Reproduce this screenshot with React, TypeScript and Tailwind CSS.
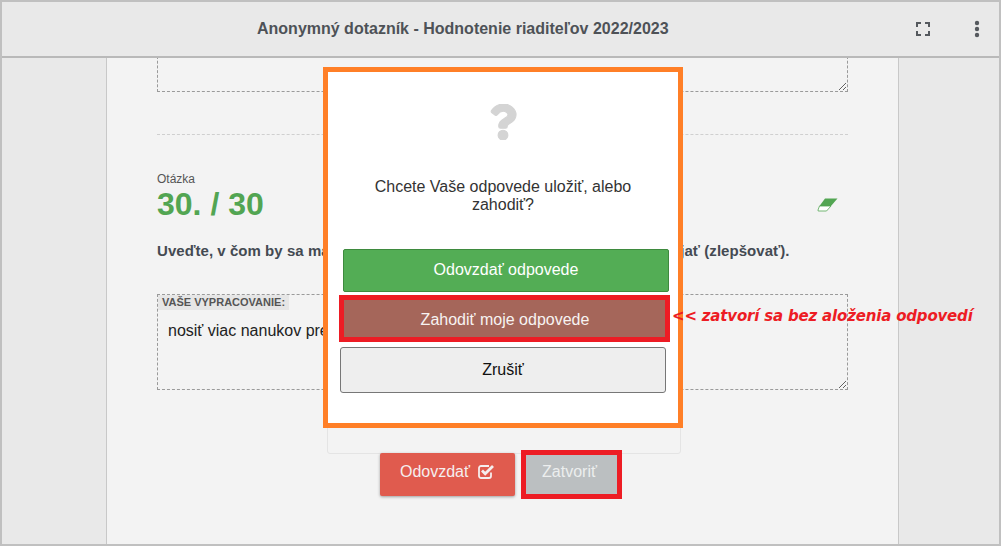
import { FaQuestion } from "react-icons/fa";

const SANS = "font-['Liberation_Sans',Arial,sans-serif]";

function FullscreenIcon() {
  return (
    <svg width="14" height="14" viewBox="0 0 14 14" fill="none" stroke="#55595e" strokeWidth="2">
      <path d="M1 5V1h4M9 1h4v4M13 9v4H9M5 13H1V9" />
    </svg>
  );
}

function DotsIcon() {
  return (
    <svg width="6" height="18" viewBox="0 0 6 18" fill="#55595e">
      <circle cx="3" cy="3" r="2.2" />
      <circle cx="3" cy="9" r="2.2" />
      <circle cx="3" cy="15" r="2.2" />
    </svg>
  );
}

function EraserIcon() {
  return (
    <svg width="21" height="14" viewBox="0 0 21 14">
      <path d="M8 .5h12.5L14 8H2.5z" fill="#52a552" />
      <path d="M2.500 8H14l-4.500 5H1.200L1 12z" fill="#fff" stroke="#52a552" strokeWidth="0.800" />
    </svg>
  );
}

function CheckIcon() {
  return (
    <svg width="17" height="15" viewBox="0 0 17 15" fill="none" stroke="#f5eeee">
      <path d="M13 8.500V12a2 2 0 0 1-2 2H3a2 2 0 0 1-2-2V4a2 2 0 0 1 2-2h8" strokeWidth="1.800" />
      <path d="M4 6.500l3.200 3.200L15 2" strokeWidth="2.800" />
    </svg>
  );
}

function Answer({ height, value }: { height: string; value?: string }) {
  return (
    <textarea
      readOnly
      defaultValue={value}
      className={`block w-full ${height} border border-dashed border-[#9a9a9a] bg-transparent px-[10px] pt-[26px] text-[16px] leading-[20px] text-[#222] outline-none resize-y`}
    />
  );
}

export default function App() {
  return (
    <div className={`relative h-[546px] w-[1001px] overflow-hidden border-2 border-[#c0c0c0] bg-[#e9e9e9] ${SANS}`}>
      <header className="relative z-10 flex h-[56px] items-center border-b-2 border-[#b9b9b9] bg-[#e9e9e9]">
        <h1 className="ml-[255px] text-[16px] font-bold text-[#4e5257]">
          Anonymný dotazník - Hodnotenie riaditeľov 2022/2023
        </h1>
        <div className="ml-auto mr-[19px] flex items-center gap-[44px]">
          <FullscreenIcon />
          <DotsIcon />
        </div>
      </header>

      <main className="ml-[104px] h-[490px] w-[793px] overflow-hidden border-x border-[#c8c8c8] bg-[#f3f3f3] px-[50px]">
        <div className="-mt-[2px]">
          <Answer height="h-[36px]" />
        </div>
        <div className="mt-[42px] border-t border-dashed border-[#cfcfcf]" />

        <div className="mt-[37px] text-[12px] leading-[14px] text-[#555]">Otázka</div>
        <div className="flex items-center justify-between">
          <div className="text-[32px] font-bold leading-[37px] text-[#52a552]">30. / 30</div>
          <div className="mr-[10px]">
            <EraserIcon />
          </div>
        </div>

        <p className="mt-[19px] text-[15px] font-bold leading-[18px] tracking-[0.045px] text-[#444a52]">
          Uveďte, v čom by sa mal riaditeľ školy podľa Vás v budúcnosti viac rozvíjať (zlepšovať).
        </p>

        <div className="relative mt-[34px]">
          <span className="absolute left-px top-px bg-[#e6e6e6] px-1 text-[11px] font-bold leading-[15px] text-[#555]">
            VAŠE VYPRACOVANIE:
          </span>
          <Answer height="h-[96px]" value="nosiť viac nanukov pre všetkých" />
        </div>

        <div className="relative z-10 mt-[60px] flex items-start">
          <button className="ml-[223px] mt-[3px] flex h-[43px] w-[135px] items-center justify-center gap-2 rounded-[2px] bg-[#e05b4e] pb-[6px] text-[16px] text-[#f5eeee] shadow-[0_1px_3px_rgba(0,0,0,0.35)]">
            Odovzdať <CheckIcon />
          </button>
          <button className="ml-[6px] h-[49px] w-[101px] border-[5px] border-[#ed1c24] bg-[#bbbfc1] pb-[6px] pr-[4px] text-[16px] text-[#eceeee]">
            Zatvoriť
          </button>
        </div>
      </main>

      {/* dialog */}
      <div className="absolute left-[325px] top-[70px] h-[382px] w-[354px] rounded-b-[3px] border border-[#e4e4e4] bg-[#f3f3f3]" />
      <div className="absolute left-[321px] top-[65px] flex h-[361px] w-[360px] flex-col items-center border-[5px] border-[#ff7f27] bg-white">
        <FaQuestion className="mt-[32px] stroke-[#d4d4d4] stroke-[16] text-[36px] text-[#d4d4d4]" />
        <p className="mt-[38px] w-[290px] text-center text-[16px] leading-[18px] text-[#333]">
          Chcete Vaše odpovede uložiť, alebo zahodiť?
        </p>
        <button className="ml-[6px] mt-[35px] h-[43px] w-[326px] rounded-[2px] border border-[#3e8a3e] bg-[#53ad55] pb-[2px] text-[16px] text-white">
          Odovzdať odpovede
        </button>
        <button className="ml-[2px] mt-[3px] h-[47px] w-[331px] border-[5px] border-[#ed1c24] bg-[#a5665a] pl-[2px] pt-[2px] text-[16px] text-[#f7f3f2]">
          Zahodiť moje odpovede
        </button>
        <button className="mt-[5px] h-[46px] w-[326px] rounded-[3px] border border-[#777] bg-[#eeeeee] text-[16px] text-[#111]">
          Zrušiť
        </button>
      </div>

      {/* annotation */}
      <span className="absolute left-[670px] top-[305px] font-['DejaVu_Sans',sans-serif] text-[15px] font-bold italic leading-[18px] tracking-[-0.18px] whitespace-nowrap text-[#ed1c24]">
        {"<< zatvorí sa bez aloženia odpovedí"}
      </span>
    </div>
  );
}
